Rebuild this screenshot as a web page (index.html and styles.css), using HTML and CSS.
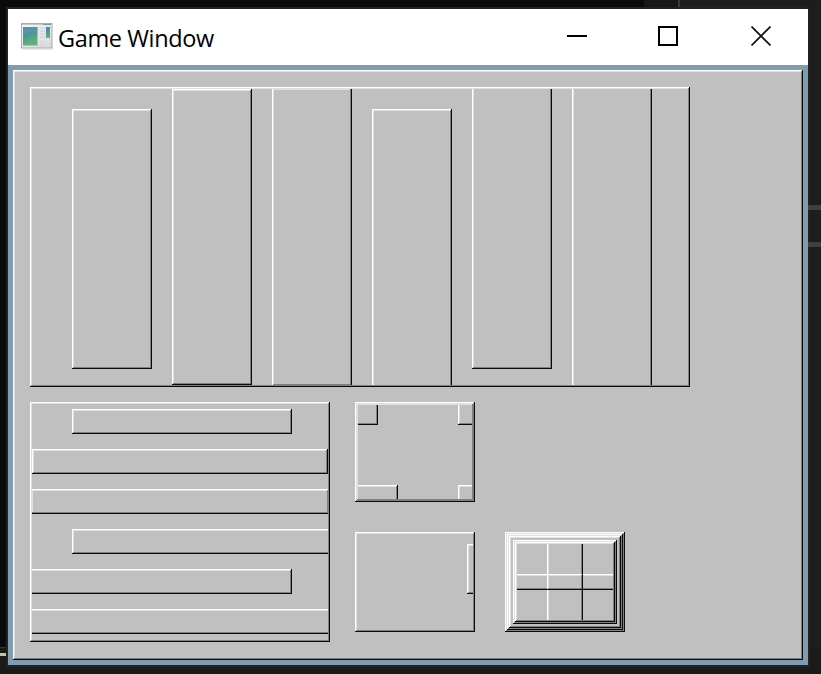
FILE: index.html
```html
<!DOCTYPE html>
<html lang="en">
<head>
<meta charset="utf-8">
<title>Game Window</title>
<link rel="stylesheet" href="styles.css">
</head>
<body>
<main class="window">
  <header class="titlebar">
    <svg class="app-icon" width="32" height="27" viewBox="0 0 32 27">
      <defs>
        <linearGradient id="screen" x1="0" y1="0" x2=".3" y2="1"><stop offset="0" stop-color="#4784aa"/><stop offset=".45" stop-color="#4b949a"/><stop offset="1" stop-color="#60b574"/></linearGradient>
        <linearGradient id="frame" x1="0" y1="0" x2="1" y2="1"><stop offset="0" stop-color="#f5f5f7"/><stop offset="1" stop-color="#d8d8de"/></linearGradient>
      </defs>
      <rect x=".5" y=".5" width="30.500" height="24.500" fill="url(#frame)" stroke="#a8abb0"/>
      <path d="M1 26h31" stroke="#d5d5d5"/>
      <path d="M1 1.500h29" stroke="#c3c8cf"/>
      <path d="M22 1.500h8" stroke="#8c929b"/>
      <rect x="2" y="4" width="14.500" height="18.500" fill="url(#screen)"/>
      <path d="M2 13q6-5 14.500-4V4H2z" fill="#72b3bd" opacity=".25"/>
      <path d="M18.500 5h5M18.500 8h5M18.500 11h5M18.500 14h5M18.500 19h5M18.500 22h5" stroke="#d0d1d8"/>
      <rect x="25" y="4" width="4" height="11" fill="url(#screen)"/>
    </svg>
    <h1 class="title">Game Window</h1>
    <div class="controls">
      <svg width="20" height="20" viewBox="0 0 20 20"><path d="M0 10h20" stroke="#000" stroke-width="2"/></svg>
      <svg width="20" height="20" viewBox="0 0 20 20"><rect x="1" y="1" width="18" height="18" fill="none" stroke="#000" stroke-width="2"/></svg>
      <svg width="20" height="20" viewBox="0 0 20 20"><path d="M.5.5l19 19M19.500.5l-19 19" stroke="#111" stroke-width="1.700"/></svg>
    </div>
  </header>
  <div class="client">
    <section class="bevel root">
      <div class="bevel columns"><div class="clip columns-track">
        <div class="bevel col inset-both"></div>
        <div class="bevel col"></div>
        <div class="bevel col bleed-one"></div>
        <div class="bevel col inset-top"></div>
        <div class="bevel col inset-bottom"></div>
        <div class="bevel col bleed"></div>
      </div></div>
      <div class="lower">
        <div class="bevel rows"><div class="clip rows-track">
          <div class="bevel row short-both"></div>
          <div class="bevel row"></div>
          <div class="bevel row bleed-row-one"></div>
          <div class="bevel row short-left"></div>
          <div class="bevel row short-right"></div>
          <div class="bevel row bleed-row"></div>
        </div></div>
        <div class="stack">
          <div class="bevel thick corners"><div class="clip corners-grid">
            <div class="bevel corner nw"></div>
            <div class="bevel corner ne"></div>
            <div class="bevel corner sw"></div>
            <div class="bevel corner se"></div>
          </div></div>
          <div class="bevel edge"><div class="clip edge-track"><div class="bevel tab"></div></div></div>
        </div>
        <div class="bevel nested"><div class="bevel nested-in"><div class="bevel nested-gap"><div class="bevel nested-in"><div class="bevel nested-in"><div class="cross"></div></div></div></div></div></div>
      </div>
    </section>
  </div>
</main>
<aside class="desktop-right"><i class="bar"></i><i class="bar"></i></aside>
</body>
</html>
```

FILE: styles.css
```css
* { box-sizing: border-box; }
body {
  margin: 0;
  width: 821px;
  height: 674px;
  overflow: hidden;
  display: flex;
  padding: 9px 0 0 8px;
  background:
    linear-gradient(#c8c49a, #c8c49a) 0 653px / 6px 3px no-repeat,
    linear-gradient(#333, #333) 0 647px / 6px 1px no-repeat,
    linear-gradient(#1a1a1a, #1a1a1a) 0 648px / 821px 26px no-repeat,
    linear-gradient(90deg, #0a0a0a 644px, #171717 644px 678px, #3a3a3a 678px 680px, #1d1d1d 680px);
}
.window {
  width: 800px;
  height: 656px;
  flex: none;
  display: flex;
  flex-direction: column;
  box-shadow: 0 0 0 2px #222;
}
.titlebar {
  height: 56px;
  flex: none;
  background: #fff;
  display: flex;
  align-items: center;
  padding: 0 37px 0 13px;
}
.app-icon { margin-top: -2px; flex: none; }
.title {
  margin: 2px 0 0 5px;
  font: 400 23.5px/32px "Open Sans", "Noto Sans", sans-serif;
  letter-spacing: -0.38px;
  white-space: nowrap;
  color: #000;
}
.controls {
  margin-left: auto;
  display: flex;
  gap: 71px;
  padding-bottom: 2px;
}
.controls svg:last-child { margin-left: 2px; }
.controls svg { display: block; }
.client { flex: 1; background: #7f9db1; padding: 5px; }

.bevel {
  padding: 2px;
  background: #c0c0c0;
  box-shadow:
    inset -1px -1px #0a0a0a,
    inset 1px 1px #fff,
    inset -2px -2px #808080,
    inset 2px 2px #dfdfdf;
}
.thick {
  padding: 3px;
  box-shadow:
    inset -1px -1px #0a0a0a,
    inset 1px 1px #fff,
    inset -2px -2px #808080,
    inset 2px 2px #dfdfdf,
    inset -3px -3px #808080,
    inset 3px 3px #dfdfdf;
}
.clip { width: 100%; height: 100%; overflow: hidden; }
.root { width: 790px; height: 590px; padding: 17px; }

.columns { width: 660px; height: 300px; }
.columns-track { display: flex; gap: 20px; padding-left: 40px; }
.col { width: 80px; height: 296px; flex: none; }
.inset-both { margin-top: 20px; height: 260px; }
.bleed-one { margin-top: -1px; height: 298px; }
.inset-top { margin-top: 20px; height: 300px; }
.inset-bottom { margin-top: -4px; height: 284px; }
.bleed { margin-top: -4px; height: 304px; }

.lower { display: flex; align-items: flex-start; margin-top: 15px; }
.rows { width: 300px; height: 240px; }
.rows-track { display: flex; flex-direction: column; gap: 15px; padding-top: 5px; }
.row { height: 25px; flex: none; }
.short-both { margin: 0 36px 0 40px; }
.bleed-row-one { margin: 0 -1px; }
.short-left { margin: 0 -4px 0 40px; }
.short-right { margin: 0 36px 0 -4px; }
.bleed-row { margin: 0 -4px; }

.stack { margin-left: 25px; display: flex; flex-direction: column; gap: 30px; }
.corners, .edge { width: 120px; height: 100px; }
.corners-grid {
  display: grid;
  grid-template-columns: 1fr 1fr;
  justify-content: space-between;
  align-content: space-between;
}
.corner { width: 30px; height: 30px; }
.nw { margin: -10px 0 0 -10px; }
.ne { margin: -10px -16px 0 0; justify-self: end; }
.sw { width: 50px; margin: 0 0 -16px -10px; }
.se { margin: 0 -16px -16px 0; justify-self: end; }
.edge-track { display: flex; justify-content: flex-end; padding-top: 10px; }
.tab { width: 20px; height: 50px; margin-right: -14px; flex: none; }

.nested { width: 120px; height: 100px; margin: 130px 0 0 30px; }
.nested-in, .nested-gap { width: 100%; height: 100%; }
.nested-gap { padding: 4px; }
.cross {
  width: 100%;
  height: 100%;
  background:
    linear-gradient(90deg, transparent 65px, #0a0a0a 65px 66px, transparent 66px),
    linear-gradient(transparent 45px, #0a0a0a 45px 46px, transparent 46px),
    linear-gradient(90deg, transparent 30px, #fff 30px 31px, transparent 31px),
    linear-gradient(transparent 30px, #fff 30px 31px, transparent 31px),
    linear-gradient(90deg, transparent 64px, #808080 64px 65px, transparent 65px),
    linear-gradient(transparent 44px, #808080 44px 45px, transparent 45px),
    linear-gradient(90deg, transparent 31px, #dfdfdf 31px 32px, transparent 32px),
    linear-gradient(transparent 31px, #dfdfdf 31px 32px, transparent 32px);
}

.desktop-right {
  flex: 1;
  display: flex;
  flex-direction: column;
  gap: 32px;
  padding-top: 196px;
}
.bar { height: 5px; background: #404040; }
```
